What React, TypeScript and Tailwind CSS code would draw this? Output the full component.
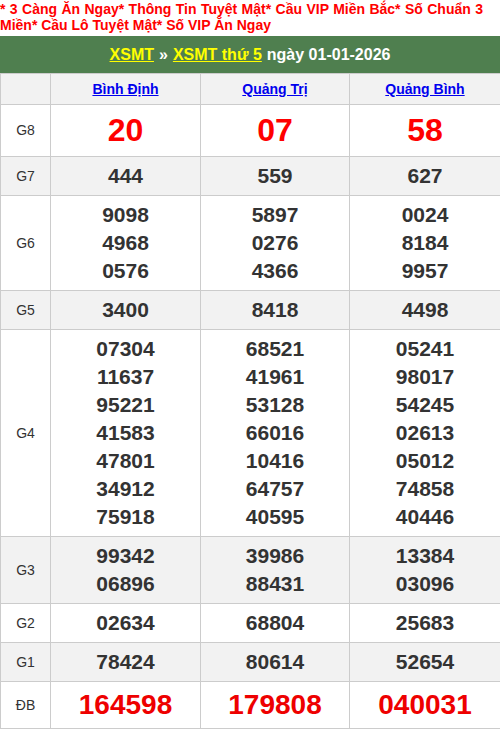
const PROVINCES = ['Bình Định', 'Quảng Trị', 'Quảng Bình'];

type Row = { label: string; values: string[][]; kind?: 'g8' | 'db' };

const ROWS: Row[] = [
  { label: 'G8', kind: 'g8', values: [['20'], ['07'], ['58']] },
  { label: 'G7', values: [['444'], ['559'], ['627']] },
  { label: 'G6', values: [['9098', '4968', '0576'], ['5897', '0276', '4366'], ['0024', '8184', '9957']] },
  { label: 'G5', values: [['3400'], ['8418'], ['4498']] },
  {
    label: 'G4',
    values: [
      ['07304', '11637', '95221', '41583', '47801', '34912', '75918'],
      ['68521', '41961', '53128', '66016', '10416', '64757', '40595'],
      ['05241', '98017', '54245', '02613', '05012', '74858', '40446'],
    ],
  },
  { label: 'G3', values: [['99342', '06896'], ['39986', '88431'], ['13384', '03096']] },
  { label: 'G2', values: [['02634'], ['68804'], ['25683']] },
  { label: 'G1', values: [['78424'], ['80614'], ['52654']] },
  { label: 'ĐB', kind: 'db', values: [['164598'], ['179808'], ['040031']] },
];

export default function App() {
  return (
    <div className="w-[500px] bg-white" style={{ fontFamily: '"Liberation Sans", Arial, sans-serif' }}>
      {/* Marquee text */}
      <p className="text-[14px] leading-[16px] font-bold text-[#ff0000] h-[36px] pt-[1px] pr-[17px] text-justify">
        * 3 Càng Ăn Ngay* Thông Tin Tuyệt Mật* Cầu VIP Miền Bắc* Số Chuẩn 3 Miền* Cầu Lô Tuyệt Mật* Số VIP Ăn Ngay
      </p>

      {/* Title bar */}
      <div className="h-[37px] bg-[#4f7f4f] flex items-center justify-center text-[16px] font-bold text-white">
        <a href="#" className="text-[#ffff00] underline">XSMT</a>
        <span className="mx-[5px]">»</span>
        <a href="#" className="text-[#ffff00] underline">XSMT thứ 5</a>
        <span className="ml-[5px]">ngày 01-01-2026</span>
      </div>

      <table className="w-[500px] border-collapse table-fixed">
        <colgroup>
          <col className="w-[50px]" />
          <col className="w-[150px]" />
          <col className="w-[149px]" />
          <col className="w-[151px]" />
        </colgroup>
        <thead>
          <tr className="bg-[#f2f2f2] h-[31px]">
            <th className="border border-[#cccccc]" />
            {PROVINCES.map((p) => (
              <th key={p} className="border border-[#cccccc] text-[14px] font-bold">
                <a href="#" className="text-[#0000ee] underline">{p}</a>
              </th>
            ))}
          </tr>
        </thead>
        <tbody>
          {ROWS.map((row, i) => (
            <tr key={row.label} className={i % 2 === 1 ? 'bg-[#f2f2f2]' : 'bg-white'}>
              <td className="border border-[#cccccc] text-center text-[14px] text-[#333333]">{row.label}</td>
              {row.values.map((vals, j) => (
                <td key={j} className="border border-[#cccccc] text-center py-[5px]">
                  {vals.map((v) => (
                    <div
                      key={v}
                      className={
                        row.kind === 'g8'
                          ? 'text-[32px] leading-[41px] font-bold text-[#ff0000]'
                          : row.kind === 'db'
                          ? 'text-[28px] leading-[36px] font-bold text-[#ee0000]'
                          : 'text-[21px] leading-[28px] font-bold text-[#333333]'
                      }
                    >
                      {v}
                    </div>
                  ))}
                </td>
              ))}
            </tr>
          ))}
        </tbody>
      </table>
    </div>
  );
}
